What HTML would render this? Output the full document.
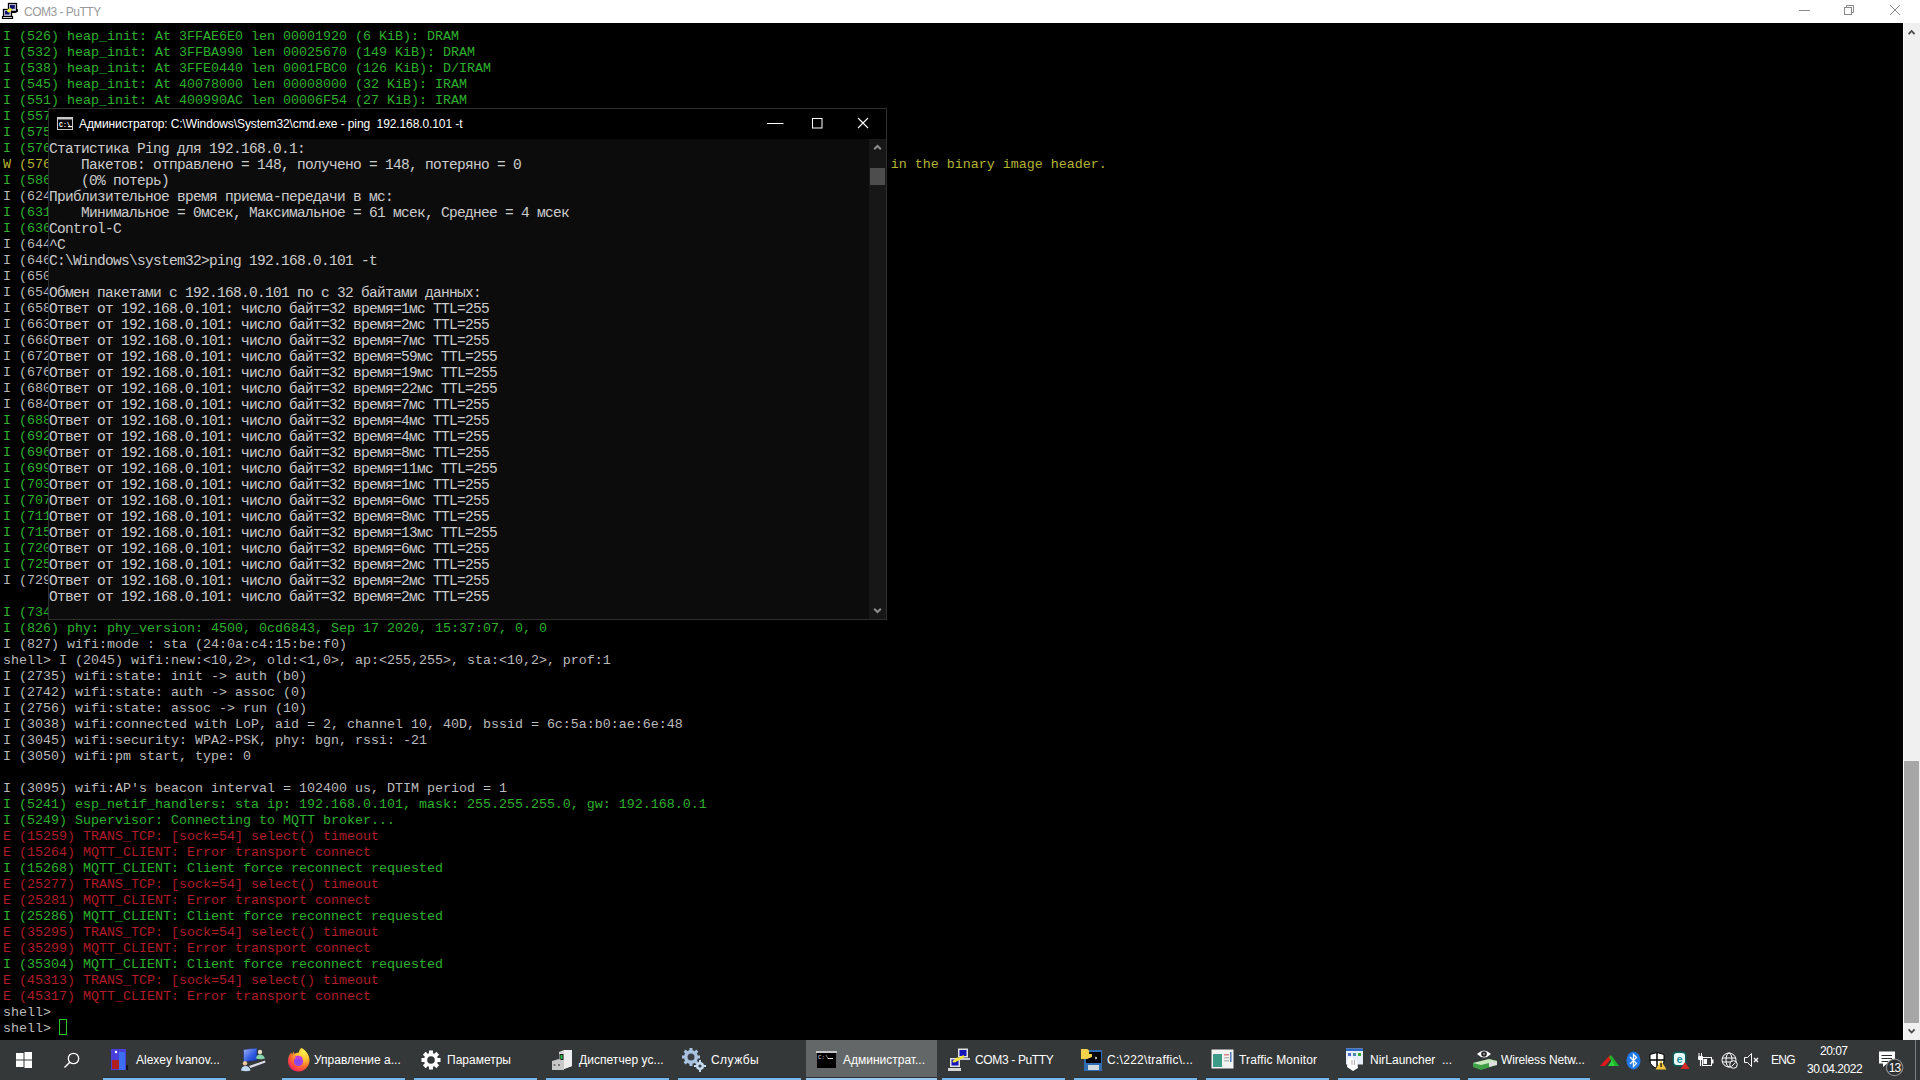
<!DOCTYPE html>
<html><head><meta charset="utf-8">
<style>
*{margin:0;padding:0;box-sizing:border-box}
html,body{width:1920px;height:1080px;overflow:hidden;background:#000}
body{position:relative;font-family:"Liberation Sans",sans-serif}
.abs{position:absolute}
#ptitle{position:absolute;left:0;top:0;width:1920px;height:23px;background:#fff}
#ptitle .t{position:absolute;left:24px;top:5px;font-size:12px;line-height:14px;color:#999;letter-spacing:-0.5px}
#pterm{position:absolute;left:0;top:23px;width:1903px;height:1017px;background:#000;overflow:hidden}
#plines{position:absolute;left:3px;top:6px;font-family:"Liberation Mono",monospace;font-size:13.333px;line-height:16px}
#plines div{height:16px;white-space:pre}
.g{color:#2eb02e}.y{color:#b4b432}.r{color:#b01c28}.w{color:#bbbbbb}
.cur{display:inline-block;width:8px;height:16px;border:1px solid #2fc42f;vertical-align:top;margin-top:-2px}
#psb{position:absolute;left:1903px;top:23px;width:17px;height:1017px;background:#f0f0f0;border-left:1px solid #fff}
#pthumb{position:absolute;left:0px;top:738px;width:15px;height:262px;background:#a6a6a6}
#cmd{position:absolute;left:48px;top:108px;width:839px;height:512px;background:#0c0c0c;border:1px solid #2e2e2e}
#ctitle{position:absolute;left:0;top:0;width:837px;height:30px;background:#000}
#ctitle .t{position:absolute;left:30px;top:8px;font-size:12px;line-height:14px;color:#fff;white-space:pre;letter-spacing:-0.1px}
#clines{position:absolute;left:0px;top:32px;font-family:"Liberation Mono",monospace;font-size:14.5px;letter-spacing:-0.7px;line-height:16px;color:#cccccc}
#clines div{height:16px;white-space:pre}
#csb{position:absolute;left:820px;top:30px;width:17px;height:480px;background:#171717}
#cthumb{position:absolute;left:1px;top:29px;width:15px;height:17px;background:#4d4d4d}
#taskbar{position:absolute;left:0;top:1040px;width:1920px;height:40px;background:#353839}
.tb{position:absolute;top:0;height:40px}
#taskbar .lbl{position:absolute;top:13px;font-size:12px;line-height:14px;color:#fff;white-space:pre}
.ul{position:absolute;bottom:0;height:2px;background:#76b9ed;box-shadow:0 -1px 0 #2a3036}
</style></head><body>
<div id="ptitle">
  <svg class="abs" style="left:0;top:0" width="22" height="22" viewBox="0 0 22 22">
    <path d="M11.5 9.5 L17.5 9.5 L17.5 11.5 L15 12.5 L11.5 12.5 Z" fill="#a8a0b8" stroke="#000" stroke-width="1"/>
    <rect x="8.5" y="3.5" width="8" height="8" fill="#d8d8f0" stroke="#000" stroke-width="1.3"/>
    <rect x="10" y="5" width="4.8" height="3.8" fill="#10106a"/>
    <path d="M2.5 16.5 H12.5 V18.5 H2.5 Z" fill="#eee" stroke="#000" stroke-width="1.2"/>
    <rect x="3.5" y="9.5" width="8" height="7" fill="#d0d0ec" stroke="#000" stroke-width="1.3"/>
    <rect x="5" y="11" width="4.5" height="3.5" fill="#10106a"/>
    <path d="M7 10 L10 8 L12 9 L11.5 11 L9 12.5 L7.5 12 Z" fill="#f0f040"/>
  </svg>
  <div class="t">COM3 - PuTTY</div>
  <svg class="abs" style="left:1796px;top:0" width="124" height="23">
    <line x1="3" y1="10.5" x2="14" y2="10.5" stroke="#888" stroke-width="1"/>
    <rect x="48.5" y="7.5" width="7" height="7" fill="none" stroke="#888"/>
    <path d="M50.5 7.5 V5.5 H57.5 V12.5 H55.5" fill="none" stroke="#888"/>
    <path d="M94 5 L104 15 M104 5 L94 15" stroke="#888"/>
  </svg>
</div>
<div id="pterm">
<div id="plines">
<div class="g">I (526) heap_init: At 3FFAE6E0 len 00001920 (6 KiB): DRAM</div>
<div class="g">I (532) heap_init: At 3FFBA990 len 00025670 (149 KiB): DRAM</div>
<div class="g">I (538) heap_init: At 3FFE0440 len 0001FBC0 (126 KiB): D/IRAM</div>
<div class="g">I (545) heap_init: At 40078000 len 00008000 (32 KiB): IRAM</div>
<div class="g">I (551) heap_init: At 400990AC len 00006F54 (27 KiB): IRAM</div>
<div class="g">I (557) spi_flash: detected chip: generic</div>
<div class="g">I (575) spi_flash: flash io: dio</div>
<div class="g">I (576) cpu_start: Starting scheduler on PRO CPU.</div>
<div class="y">W (576) spi_flash: Detected size(8192k) larger than the size in the binary image header(4096k). Using the size in the binary image header.</div>
<div class="g">I (586) cpu_start: Starting scheduler on APP CPU.</div>
<div class="w">I (624) gpio: GPIO[2]| InputEn: 0| OutputEn: 1| OpenDrain: 0</div>
<div class="g">I (631) Supervisor: Starting</div>
<div class="g">I (636) Supervisor: Init NVS</div>
<div class="w">I (644) gpio: GPIO[4]| InputEn: 0| OutputEn: 1| OpenDrain: 0</div>
<div class="w">I (646) gpio: GPIO[5]| InputEn: 0| OutputEn: 1| OpenDrain: 0</div>
<div class="w">I (650) gpio: GPIO[12]| InputEn: 0| OutputEn: 1| OpenDrain: 0</div>
<div class="w">I (654) gpio: GPIO[13]| InputEn: 0| OutputEn: 1| OpenDrain: 0</div>
<div class="w">I (658) gpio: GPIO[14]| InputEn: 0| OutputEn: 1| OpenDrain: 0</div>
<div class="w">I (663) gpio: GPIO[15]| InputEn: 0| OutputEn: 1| OpenDrain: 0</div>
<div class="w">I (668) gpio: GPIO[16]| InputEn: 0| OutputEn: 1| OpenDrain: 0</div>
<div class="w">I (672) gpio: GPIO[17]| InputEn: 0| OutputEn: 1| OpenDrain: 0</div>
<div class="w">I (676) gpio: GPIO[18]| InputEn: 0| OutputEn: 1| OpenDrain: 0</div>
<div class="w">I (680) gpio: GPIO[19]| InputEn: 0| OutputEn: 1| OpenDrain: 0</div>
<div class="w">I (684) gpio: GPIO[21]| InputEn: 0| OutputEn: 1| OpenDrain: 0</div>
<div class="g">I (688) Supervisor: Relay 1 off</div>
<div class="g">I (692) Supervisor: Relay 2 off</div>
<div class="g">I (696) Supervisor: Relay 3 off</div>
<div class="g">I (699) Supervisor: Relay 4 off</div>
<div class="g">I (703) Supervisor: Relay 5 off</div>
<div class="g">I (707) Supervisor: Relay 6 off</div>
<div class="g">I (711) Supervisor: Relay 7 off</div>
<div class="g">I (715) Supervisor: Relay 8 off</div>
<div class="g">I (720) Supervisor: Relay 9 off</div>
<div class="g">I (725) Supervisor: Relay 10 off</div>
<div class="w">I (729) wifi:wifi driver task: 3ffc1e4c, prio:23, stack:6656, core=0</div>
<div class="w">&nbsp;</div>
<div class="g">I (734) system_api: Base MAC address is not set</div>
<div class="g">I (826) phy: phy_version: 4500, 0cd6843, Sep 17 2020, 15:37:07, 0, 0</div>
<div class="w">I (827) wifi:mode : sta (24:0a:c4:15:be:f0)</div>
<div class="w">shell&gt; I (2045) wifi:new:&lt;10,2&gt;, old:&lt;1,0&gt;, ap:&lt;255,255&gt;, sta:&lt;10,2&gt;, prof:1</div>
<div class="w">I (2735) wifi:state: init -&gt; auth (b0)</div>
<div class="w">I (2742) wifi:state: auth -&gt; assoc (0)</div>
<div class="w">I (2756) wifi:state: assoc -&gt; run (10)</div>
<div class="w">I (3038) wifi:connected with LoP, aid = 2, channel 10, 40D, bssid = 6c:5a:b0:ae:6e:48</div>
<div class="w">I (3045) wifi:security: WPA2-PSK, phy: bgn, rssi: -21</div>
<div class="w">I (3050) wifi:pm start, type: 0</div>
<div class="w">&nbsp;</div>
<div class="w">I (3095) wifi:AP's beacon interval = 102400 us, DTIM period = 1</div>
<div class="g">I (5241) esp_netif_handlers: sta ip: 192.168.0.101, mask: 255.255.255.0, gw: 192.168.0.1</div>
<div class="g">I (5249) Supervisor: Connecting to MQTT broker...</div>
<div class="r">E (15259) TRANS_TCP: [sock=54] select() timeout</div>
<div class="r">E (15264) MQTT_CLIENT: Error transport connect</div>
<div class="g">I (15268) MQTT_CLIENT: Client force reconnect requested</div>
<div class="r">E (25277) TRANS_TCP: [sock=54] select() timeout</div>
<div class="r">E (25281) MQTT_CLIENT: Error transport connect</div>
<div class="g">I (25286) MQTT_CLIENT: Client force reconnect requested</div>
<div class="r">E (35295) TRANS_TCP: [sock=54] select() timeout</div>
<div class="r">E (35299) MQTT_CLIENT: Error transport connect</div>
<div class="g">I (35304) MQTT_CLIENT: Client force reconnect requested</div>
<div class="r">E (45313) TRANS_TCP: [sock=54] select() timeout</div>
<div class="r">E (45317) MQTT_CLIENT: Error transport connect</div>
<div class="w">shell&gt;</div>
<div class="w">shell&gt; <span class="cur"></span></div>
</div>
</div>
<div id="psb"><div id="pthumb"></div>
  <svg class="abs" style="left:0;top:0" width="16" height="17"><path d="M4.6 11.2 L7.6 8 L10.6 11.2" fill="none" stroke="#4a4a4a" stroke-width="1.8"/></svg>
  <svg class="abs" style="left:0;top:1000px" width="16" height="17"><path d="M4.6 6.3 L7.6 9.5 L10.6 6.3" fill="none" stroke="#4a4a4a" stroke-width="1.8"/></svg>
</div>
<div id="cmd">
  <div id="ctitle">
    <svg class="abs" style="left:8px;top:8px" width="17" height="14" viewBox="0 0 17 14">
      <rect x="0.5" y="0.5" width="15" height="12" fill="#000" stroke="#c8c8c8" stroke-width="1"/>
      <rect x="0.5" y="0.5" width="15" height="2" fill="#c8c8c8"/>
      <text x="2" y="10" font-size="6.5" fill="#fff" font-family="Liberation Mono" font-weight="bold">C:\</text>
      <rect x="11" y="9" width="4" height="1.2" fill="#fff"/>
    </svg>
    <div class="t">Администратор: C:\Windows\System32\cmd.exe - ping  192.168.0.101 -t</div>
    <svg class="abs" style="left:700px;top:0" width="137" height="30">
      <line x1="18" y1="14.5" x2="34.5" y2="14.5" stroke="#fff" stroke-width="1"/>
      <rect x="63.5" y="9.5" width="9.5" height="9.5" fill="none" stroke="#fff" stroke-width="1"/>
      <path d="M109 9 L119 19 M119 9 L109 19" stroke="#fff" stroke-width="1.1"/>
    </svg>
  </div>
  <div id="clines">
<div>Статистика Ping для 192.168.0.1:</div>
<div>    Пакетов: отправлено = 148, получено = 148, потеряно = 0</div>
<div>    (0% потерь)</div>
<div>Приблизительное время приема-передачи в мс:</div>
<div>    Минимальное = 0мсек, Максимальное = 61 мсек, Среднее = 4 мсек</div>
<div>Control-C</div>
<div>^C</div>
<div>C:\Windows\system32&gt;ping 192.168.0.101 -t</div>
<div>&nbsp;</div>
<div>Обмен пакетами с 192.168.0.101 по с 32 байтами данных:</div>
<div>Ответ от 192.168.0.101: число байт=32 время=1мс TTL=255</div>
<div>Ответ от 192.168.0.101: число байт=32 время=2мс TTL=255</div>
<div>Ответ от 192.168.0.101: число байт=32 время=7мс TTL=255</div>
<div>Ответ от 192.168.0.101: число байт=32 время=59мс TTL=255</div>
<div>Ответ от 192.168.0.101: число байт=32 время=19мс TTL=255</div>
<div>Ответ от 192.168.0.101: число байт=32 время=22мс TTL=255</div>
<div>Ответ от 192.168.0.101: число байт=32 время=7мс TTL=255</div>
<div>Ответ от 192.168.0.101: число байт=32 время=4мс TTL=255</div>
<div>Ответ от 192.168.0.101: число байт=32 время=4мс TTL=255</div>
<div>Ответ от 192.168.0.101: число байт=32 время=8мс TTL=255</div>
<div>Ответ от 192.168.0.101: число байт=32 время=11мс TTL=255</div>
<div>Ответ от 192.168.0.101: число байт=32 время=1мс TTL=255</div>
<div>Ответ от 192.168.0.101: число байт=32 время=6мс TTL=255</div>
<div>Ответ от 192.168.0.101: число байт=32 время=8мс TTL=255</div>
<div>Ответ от 192.168.0.101: число байт=32 время=13мс TTL=255</div>
<div>Ответ от 192.168.0.101: число байт=32 время=6мс TTL=255</div>
<div>Ответ от 192.168.0.101: число байт=32 время=2мс TTL=255</div>
<div>Ответ от 192.168.0.101: число байт=32 время=2мс TTL=255</div>
<div>Ответ от 192.168.0.101: число байт=32 время=2мс TTL=255</div>
  </div>
  <div id="csb"><div id="cthumb"></div>
    <svg class="abs" style="left:0;top:0" width="17" height="17"><path d="M5.2 10.3 L8.5 7 L11.8 10.3" fill="none" stroke="#8c8c8c" stroke-width="2"/></svg>
    <svg class="abs" style="left:0;top:463px" width="17" height="17"><path d="M5.2 6.7 L8.5 10 L11.8 6.7" fill="none" stroke="#8c8c8c" stroke-width="2"/></svg>
  </div>
</div>
<div id="taskbar">
  <!-- start -->
  <svg class="abs" style="left:16px;top:12px" width="16" height="16" viewBox="0 0 16 16">
    <rect x="0" y="1" width="7.5" height="6.5" fill="#fff"/><rect x="8.5" y="0" width="7.5" height="7.5" fill="#fff"/>
    <rect x="0" y="8.5" width="7.5" height="6.5" fill="#fff"/><rect x="8.5" y="8.5" width="7.5" height="7.5" fill="#fff"/>
  </svg>
  <!-- search -->
  <svg class="abs" style="left:63px;top:12px" width="18" height="18" viewBox="0 0 18 18">
    <circle cx="10.5" cy="6.5" r="5.2" fill="none" stroke="#fff" stroke-width="1.3"/>
    <line x1="6.8" y1="10.2" x2="1.5" y2="15.5" stroke="#fff" stroke-width="1.5"/>
  </svg>
  <!-- item1 Alexey -->
  <svg class="abs" style="left:110px;top:8px" width="20" height="24" viewBox="0 0 20 24">
    <rect x="1" y="1" width="15" height="21" fill="#4a3fd8"/>
    <rect x="9" y="4" width="6" height="18" fill="#3b6ef0"/>
    <rect x="2" y="12" width="7" height="9" fill="#b02020"/>
    <circle cx="6" cy="4" r="1.2" fill="#fff"/>
    <rect x="16" y="17" width="2" height="5" fill="#000" opacity=".6"/>
  </svg>
  <div class="lbl" style="left:136px">Alexey Ivanov...</div>
  <div class="ul" style="left:103px;width:123px"></div>
  <!-- item2 network -->
  <svg class="abs" style="left:240px;top:6px" width="28" height="28" viewBox="0 0 28 28">
    <defs><linearGradient id="nm" x1="0" y1="0" x2="1" y2="1"><stop offset="0" stop-color="#a8b8f8"/><stop offset="0.6" stop-color="#2c5ae0"/><stop offset="1" stop-color="#1a3cc0"/></linearGradient></defs>
    <path d="M3.5 3.5 L17 2 L17 14.5 L3.5 16 Z" fill="url(#nm)" stroke="#1c2c60" stroke-width=".6"/>
    <circle cx="20" cy="6" r="2.2" fill="#e8dcc0"/>
    <path d="M16 12.5 Q16.5 8.5 20 8.5 Q23.5 8.5 25 12.5 Q21 14 16 12.5 Z" fill="#86d6ac"/>
    <path d="M9 20 L25 14.5 L25.5 16.5 L10.5 22 Z" fill="#dcdce6"/>
    <circle cx="5" cy="17.2" r="2.2" fill="#e8c89c"/>
    <path d="M1 24.5 Q1.5 20 5.5 20 Q9.5 20 10.5 24.5 Q6 26 1 24.5 Z" fill="#c0dcf4"/>
  </svg>
  <!-- item3 firefox -->
  <svg class="abs" style="left:287px;top:7px" width="24" height="26" viewBox="0 0 24 26">
    <defs>
      <radialGradient id="ff" cx="0.75" cy="0.15" r="1.05"><stop offset="0" stop-color="#fff44f"/><stop offset="0.35" stop-color="#ffbd2e"/><stop offset="0.62" stop-color="#ff6a2e"/><stop offset="0.85" stop-color="#ff2e58"/><stop offset="1" stop-color="#e31587"/></radialGradient>
      <radialGradient id="fp" cx="0.4" cy="0.6" r="0.7"><stop offset="0" stop-color="#7a4cf0"/><stop offset="1" stop-color="#b83ce0"/></radialGradient>
    </defs>
    <path d="M11.5 24.5 C5 24.5 1 19.5 1 14 C1 10 2.5 7 4.5 5.5 L5 8 L6.5 4.5 L7.5 7 C9 6 11 5.5 12 5.5 C12 3.5 13 2 14.5 1 C18.5 3 22.5 7.5 22.5 13.5 C22.5 19.5 17.5 24.5 11.5 24.5 Z" fill="url(#ff)"/>
    <circle cx="11.5" cy="14.5" r="4.6" fill="url(#fp)"/>
    <path d="M7.5 10 C9 8.5 13 8 15.5 10.5 C15.5 12 14 12.5 12 12 Z" fill="#c23ee0"/>
  </svg>
  <div class="lbl" style="left:314px;letter-spacing:0px">Управление а...</div>
  <div class="ul" style="left:282px;width:123px"></div>
  <!-- item4 gear -->
  <svg class="abs" style="left:421px;top:10px" width="20" height="20" viewBox="0 0 20 20">
    <g fill="#fff">
      <circle cx="10" cy="10" r="7"/>
      <rect x="8" y="0.5" width="4" height="19"/>
      <rect x="0.5" y="8" width="19" height="4"/>
      <rect x="8" y="0.5" width="4" height="19" transform="rotate(45 10 10)"/>
      <rect x="8" y="0.5" width="4" height="19" transform="rotate(-45 10 10)"/>
    </g>
    <circle cx="10" cy="10" r="3.8" fill="#353839"/>
  </svg>
  <div class="lbl" style="left:447px">Параметры</div>
  <div class="ul" style="left:414px;width:123px"></div>
  <!-- item5 device manager -->
  <svg class="abs" style="left:551px;top:9px" width="24" height="22" viewBox="0 0 24 22">
    <path d="M8 3 L13 1 L21 1 L21 17 L13 20 L8 20 Z" fill="#d8d8d8"/>
    <path d="M13 1 L21 1 L21 17 L13 20 Z" fill="#eeeeee"/>
    <rect x="8.5" y="5" width="4" height="6" fill="#1a1a1a"/><rect x="9.5" y="6" width="2" height="4" fill="#2ec24a"/>
    <path d="M1 12 L8 10 L13 12 L13 21 L1 21 Z" fill="#c8c8c8"/>
    <rect x="2.5" y="15" width="2" height="2" fill="#777"/><rect x="7" y="15" width="2" height="2" fill="#777"/>
  </svg>
  <div class="lbl" style="left:579px;letter-spacing:0.05px">Диспетчер ус...</div>
  <div class="ul" style="left:546px;width:123px"></div>
  <!-- item6 services gears -->
  <svg class="abs" style="left:682px;top:8px" width="24" height="24" viewBox="0 0 24 24">
    <g fill="#a9c4e0">
      <circle cx="9" cy="9" r="7"/>
      <rect x="7.5" y="0" width="3" height="18"/><rect x="0" y="7.5" width="18" height="3"/>
      <rect x="7.5" y="0" width="3" height="18" transform="rotate(45 9 9)"/><rect x="7.5" y="0" width="3" height="18" transform="rotate(-45 9 9)"/>
    </g>
    <circle cx="9" cy="9" r="3.5" fill="#3a4046"/>
    <g fill="#c6daf0">
      <circle cx="18" cy="18" r="4"/>
      <rect x="17" y="12" width="2" height="12"/><rect x="12" y="17" width="12" height="2"/>
    </g>
    <circle cx="18" cy="18" r="1.6" fill="#3a4046"/>
  </svg>
  <div class="lbl" style="left:711px;letter-spacing:0.45px">Службы</div>
  <div class="ul" style="left:678px;width:123px"></div>
  <!-- item7 active cmd -->
  <div class="abs" style="left:806px;top:0;width:131px;height:40px;background:#646767"></div>
  <svg class="abs" style="left:816px;top:11px" width="22" height="18" viewBox="0 0 22 18">
    <rect x="0" y="0" width="21" height="17" fill="#c8c8c8"/>
    <rect x="0.5" y="2" width="20" height="15" fill="#000"/>
    <text x="2" y="8" font-size="6" fill="#ddd" font-family="Liberation Mono">C:\</text>
    <rect x="12" y="7" width="5" height="1" fill="#ddd"/>
  </svg>
  <div class="lbl" style="left:843px">Администрат...</div>
  <div class="ul" style="left:806px;width:131px;background:#99c9ef"></div>
  <!-- item8 putty -->
  <svg class="abs" style="left:947px;top:8px" width="24" height="24" viewBox="0 0 24 24">
    <rect x="11" y="0.5" width="10" height="9" fill="#e0e0e0"/><rect x="12.5" y="2" width="7" height="6" fill="#1414b8"/>
    <rect x="13" y="10" width="10" height="2" fill="#c8c8c8"/>
    <rect x="3" y="10" width="10" height="9" fill="#e0e0e0"/><rect x="4.5" y="11.5" width="7" height="6" fill="#1414b8"/>
    <rect x="1" y="20" width="13" height="3" fill="#d8d8d8"/>
    <path d="M6 14 L11 10 L10 12 L17 8" stroke="#f4e43a" stroke-width="2.2" fill="none"/>
  </svg>
  <div class="lbl" style="left:975px;letter-spacing:-0.35px">COM3 - PuTTY</div>
  <div class="ul" style="left:942px;width:123px"></div>
  <!-- item9 python -->
  <svg class="abs" style="left:1080px;top:8px" width="23" height="24" viewBox="0 0 23 24">
    <rect x="4" y="2" width="18" height="21" fill="#2f6db3"/>
    <rect x="6" y="4" width="15" height="11" fill="#000"/>
    <rect x="8" y="17" width="11" height="5" fill="#d0d8e0"/>
    <path d="M1 1 L7 1 Q10 2 9 6 L12 6 L12 9 L7 11 L1 11 Z" fill="#f1d34a"/>
    <path d="M15 9 L17 10 L15 11" stroke="#ddd" fill="none"/>
  </svg>
  <div class="lbl" style="left:1107px;letter-spacing:0.28px">C:\222\traffic\...</div>
  <div class="ul" style="left:1074px;width:123px"></div>
  <!-- item10 traffic monitor -->
  <svg class="abs" style="left:1211px;top:9px" width="23" height="20" viewBox="0 0 23 20">
    <rect x="0.5" y="0.5" width="22" height="19" fill="#f2f2f2"/>
    <rect x="2" y="5" width="9" height="13" fill="#3c9b86"/>
    <rect x="13" y="5" width="5" height="1.5" fill="#d88"/><rect x="13" y="8" width="5" height="1.5" fill="#bbb"/><rect x="13" y="11" width="5" height="1.5" fill="#bbb"/>
    <rect x="19" y="3" width="1.5" height="10" fill="#4a7ab8"/>
  </svg>
  <div class="lbl" style="left:1239px;letter-spacing:0.14px">Traffic Monitor</div>
  <div class="ul" style="left:1206px;width:123px"></div>
  <!-- item11 nirlauncher -->
  <svg class="abs" style="left:1344px;top:8px" width="20" height="24" viewBox="0 0 20 24">
    <rect x="2" y="0.5" width="17" height="16" fill="#e8eef8"/>
    <rect x="2" y="0.5" width="17" height="2.5" fill="#2a6ac8"/>
    <rect x="4" y="5" width="3" height="3" fill="#4a6ad0"/><rect x="9" y="5" width="3" height="3" fill="#48a"/><rect x="14" y="5" width="3" height="3" fill="#3a3"/>
    <path d="M4 11 L8 9 L10 12 L13 12 L14 20 L9 23 L3 19 Z" fill="#fff"/>
    <path d="M8 12 L8 17 M10.5 12 L10.5 17" stroke="#999" stroke-width=".8"/>
  </svg>
  <div class="lbl" style="left:1370px">NirLauncher  ...</div>
  <div class="ul" style="left:1338px;width:122px"></div>
  <!-- item12 wireless -->
  <svg class="abs" style="left:1472px;top:8px" width="26" height="23" viewBox="0 0 26 23">
    <path d="M5 6 Q12 -1 19 6 Q12 13 5 6 Z" fill="#fff"/>
    <circle cx="12" cy="6" r="2.8" fill="#222"/><circle cx="12" cy="6" r="1.2" fill="#888"/>
    <path d="M1 15 L17 11 L25 13 L25 17 L9 22 L1 19 Z" fill="#3fa046"/>
    <path d="M1 15 L17 11 L25 13 L9 17 Z" fill="#c8e8c0"/>
    <path d="M17 14 L25 13 L25 17 L17 19 Z" fill="#e0e0e0"/>
  </svg>
  <div class="lbl" style="left:1501px;letter-spacing:-0.15px">Wireless Netw...</div>
  <div class="ul" style="left:1468px;width:122px"></div>
  <!-- tray -->
  <svg class="abs" style="left:1600px;top:12px" width="20" height="16" viewBox="0 0 20 16">
    <path d="M0 14 L10 3 L12 6 L5 14 Z" fill="#e01818"/>
    <path d="M9 5 L11 3 L19 14 L14 14 Z" fill="#1fb52a"/>
    <path d="M8 14 L12 8 L15 14 Z" fill="#30d040"/>
  </svg>
  <svg class="abs" style="left:1626px;top:11px" width="15" height="19" viewBox="0 0 15 19">
    <ellipse cx="7.5" cy="9.5" rx="7" ry="9" fill="#1f7ae8"/>
    <path d="M4 6 L10.5 12.5 L7.5 15.5 L7.5 3.5 L10.5 6.5 L4 13" stroke="#fff" stroke-width="1.3" fill="none"/>
  </svg>
  <svg class="abs" style="left:1649px;top:12px" width="18" height="18" viewBox="0 0 18 18">
    <path d="M8 0.5 L15 2.5 L15 9 Q15 14 8 16.5 Q1 14 1 9 L1 2.5 Z" fill="#fff" stroke="#000" stroke-width="1"/>
    <path d="M8 1 V16 M1 8 H15" stroke="#000" stroke-width="1.5"/>
    <path d="M12 8.5 L17.5 17.5 L6.5 17.5 Z" fill="#f2c53d"/>
    <rect x="11.5" y="11" width="1.2" height="4" fill="#000"/>
  </svg>
  <svg class="abs" style="left:1672px;top:11px" width="18" height="19" viewBox="0 0 18 19">
    <rect x="0.5" y="0.5" width="14" height="15" rx="4" fill="#0c5f5a"/>
    <rect x="2" y="2" width="11" height="12" rx="3" fill="#e8fcfc"/>
    <text x="7.5" y="11.5" font-size="11" font-weight="bold" text-anchor="middle" fill="#1a8c96" font-family="Liberation Sans">e</text>
    <path d="M13 11 L17.5 18 L8.5 18 Z" fill="#d42a2a"/>
  </svg>
  <svg class="abs" style="left:1697px;top:12px" width="18" height="16" viewBox="0 0 18 16">
    <path d="M2 1 V4 M4.5 1 V4" stroke="#fff" stroke-width="1"/>
    <rect x="1" y="4" width="5" height="4" rx="1" fill="#fff"/>
    <path d="M3.5 8 V14" stroke="#fff" stroke-width="1.2"/>
    <rect x="5.5" y="5.5" width="9" height="8" fill="none" stroke="#fff" stroke-width="1"/>
    <rect x="15" y="7.5" width="1.5" height="4" fill="#fff"/>
    <rect x="6.5" y="7" width="3.5" height="5" fill="#fff"/>
  </svg>
  <svg class="abs" style="left:1721px;top:12px" width="17" height="17" viewBox="0 0 17 17">
    <circle cx="8" cy="8" r="7" fill="none" stroke="#fff" stroke-width="1"/>
    <ellipse cx="8" cy="8" rx="3" ry="7" fill="none" stroke="#fff" stroke-width="1"/>
    <path d="M1 6 H15 M1 10 H15" stroke="#fff" stroke-width="1"/>
    <circle cx="12.5" cy="12.5" r="3.8" fill="#353839" stroke="#fff" stroke-width="1"/>
    <path d="M10.5 14.5 L14.5 10.5" stroke="#fff" stroke-width="1"/>
  </svg>
  <svg class="abs" style="left:1744px;top:13px" width="16" height="14" viewBox="0 0 16 14">
    <path d="M0.5 4.5 H3.5 L7.5 0.5 V13.5 L3.5 9.5 H0.5 Z" fill="none" stroke="#fff" stroke-width="1"/>
    <path d="M10 5 L14 9 M14 5 L10 9" stroke="#fff" stroke-width="1.2"/>
  </svg>
  <div class="lbl" style="left:1771px;top:13px;letter-spacing:-0.7px">ENG</div>
  <div class="lbl" style="left:1820px;top:4px;letter-spacing:-0.5px">20:07</div>
  <div class="lbl" style="left:1807px;top:22px;letter-spacing:-0.5px">30.04.2022</div>
  <svg class="abs" style="left:1877px;top:9px" width="28" height="28" viewBox="0 0 28 28">
    <path d="M2 2.5 H18 V14.5 H10 L6 18 V14.5 H2 Z" fill="#fff"/>
    <path d="M4.5 6.5 H15 M4.5 9.5 H15 M4.5 12.5 H11" stroke="#2a2d2e" stroke-width="1"/>
    <circle cx="17.6" cy="18.4" r="8.2" fill="#2b2e2f" stroke="#8c8c8c" stroke-width="1.2"/>
    <text x="17.6" y="22.6" text-anchor="middle" fill="#fff" style="font-family:'Liberation Sans',sans-serif;font-size:12px;letter-spacing:-0.8px">13</text>
  </svg>
  <div class="abs" style="left:1915px;top:0;width:1px;height:40px;background:#7a7e80"></div>
</div>
</body></html>
